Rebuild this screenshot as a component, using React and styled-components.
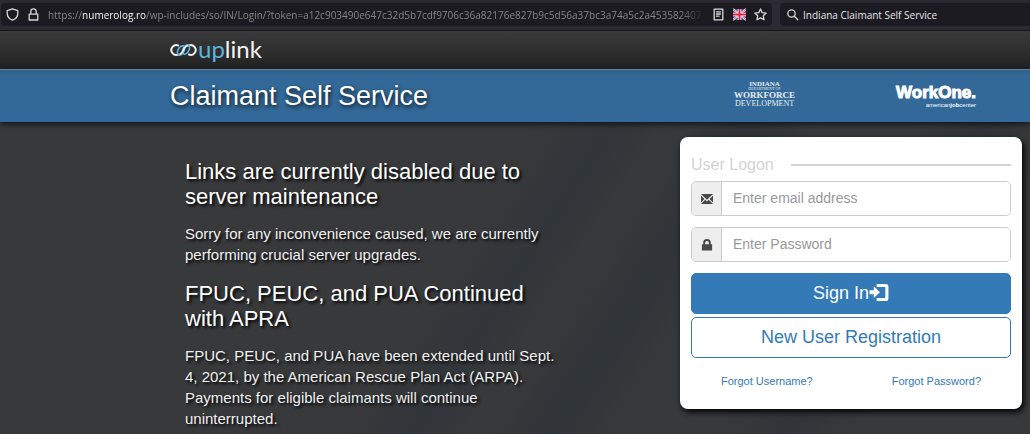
import React, { useState } from 'react'
import styled, { createGlobalStyle } from 'styled-components'

const GlobalStyle = createGlobalStyle`
    * {
        box-sizing: border-box;
    }

    body {
        margin: 0;
        background: #38393b;
        font-family: "Liberation Sans", Arial, sans-serif;
    }

    h1, h2, p {
        margin: 0;
        font-weight: 400;
    }
`

/* browser toolbar */

const Toolbar = styled.div`
    display: flex;
    gap: 8px;
    height: 31px;
    padding: 3px 0 4px 1px;
    background: #2b2a33;
    border-bottom: 1px solid #151515;
    font-family: "Open Sans", "Noto Sans", sans-serif;
`

const UrlField = styled.div`
    display: flex;
    align-items: center;
    flex: 78 1 0;
    min-width: 0;
    gap: 8px;
    padding: 0 5px;
    background: #1c1b22;
    border-radius: 4px;
`

const Url = styled.span`
    flex: 1;
    min-width: 0;
    overflow: hidden;
    white-space: nowrap;
    font-size: 10px;
    line-height: 24px;
    color: #85848b;
    mask-image: linear-gradient(to left, transparent, #000 24px);

    b {
        font-weight: 400;
        color: #f4f4f8;
    }
`

const SearchField = styled.label`
    display: flex;
    align-items: center;
    flex: 25 1 0;
    min-width: 0;
    gap: 4px;
    padding-left: 6px;
    background: #1c1b22;
    border-radius: 4px 0 0 4px;

    input {
        flex: 1;
        min-width: 0;
        padding: 0;
        border: 0;
        outline: 0;
        background: none;
        color: #e4e4e8;
        font: 10px "Open Sans", "Noto Sans", sans-serif;
    }
`

const Icon = styled.svg`
    flex: none;
    width: 13px;
    height: 13px;
    fill: none;
    stroke: #d6d6da;
    stroke-width: 1.3;
    stroke-linejoin: round;
    stroke-linecap: round;
`

/* site header */

const TopBar = styled.header`
    display: flex;
    align-items: center;
    height: 38px;
    padding-left: 170px;
    background: linear-gradient(#3b3b3b, #222);
`

const Brand = styled.a`
    display: flex;
    align-items: center;
    gap: 1px;
    padding-bottom: 2px;
    color: #f2f2f2;
    font: 400 24px/30px Lato, sans-serif;
    text-decoration: none;

    span span {
        color: #5cb3dd;
    }
`

const Rings = styled.svg`
    width: 27px;
    height: 16px;
    fill: none;
    stroke-width: 2;
`

const TitleBar = styled.div`
    display: flex;
    align-items: center;
    height: 53px;
    padding: 0 54px 0 170px;
    background: linear-gradient(#2f5f8c, #336998 6px);
    border-top: 1px solid #66839c;
    box-shadow: 0 2px 6px rgba(0, 0, 0, .7);
    position: relative;
    color: #fff;

    h1 {
        flex: 1;
        font-size: 27px;
        line-height: 32px;
        text-shadow: 1px 2px 4px rgba(0, 0, 0, .8);
    }
`

const WorkforceLogo = styled.div`
    display: flex;
    flex-direction: column;
    align-items: center;
    margin-right: 101px;
    padding-bottom: 3px;
    color: #e6edf4;
    font-family: "Liberation Serif", "Times New Roman", serif;
    font-size: 8px;
    line-height: 8px;

    b {
        font-size: 7px;
        line-height: 6px;
    }

    small {
        font-size: 4px;
        line-height: 4px;
    }

    strong {
        font-size: 9px;
        line-height: 9px;
    }
`

const WorkOneLogo = styled.div`
    display: flex;
    flex-direction: column;
    align-items: flex-end;
    font: bold 17px/18px "Liberation Sans", Arial, sans-serif;
    -webkit-text-stroke: 1px #fff;

    small {
        font-size: 6px;
        line-height: 6px;
        font-weight: 400;
        -webkit-text-stroke: 0;
    }
`

/* content */

const Main = styled.main`
    display: grid;
    grid-template-columns: minmax(0, 380px) 342px;
    justify-content: space-between;
    align-items: start;
    min-height: calc(100vh - 122px);
    padding: 15px 8px 0 185px;
    background: linear-gradient(123deg, #38393b 43%, #31363a 50%, #38393b 55%, #303539 61%, #38393b 67%, #38393b 74%, #313539 80%, #38393b 86%);
`

const News = styled.section`
    padding-top: 22px;
    color: #fff;
    text-shadow: 2px 2px 3px #000;

    h2 {
        margin-bottom: 14px;
        font-size: 22px;
        line-height: 25px;
    }

    p {
        margin-bottom: 16px;
        font-size: 15px;
        line-height: 21px;
        color: #f0f0f0;
    }

    p:last-child {
        margin-bottom: 0;
    }
`

const Card = styled.form`
    display: flex;
    flex-direction: column;
    padding: 18px 11px 21px;
    background: #fff;
    border-radius: 8px;
    box-shadow: 2px 3px 6px #000;
`

const Legend = styled.div`
    display: flex;
    align-items: center;
    gap: 17px;
    margin-bottom: 6px;
    color: #d3d3d3;
    font-size: 16px;
    line-height: 20px;

    &::after {
        content: '';
        flex: 1;
        height: 2px;
        background: #d3d3d3;
    }
`

const InputGroup = styled.label`
    display: flex;
    height: 35px;
    margin-bottom: 11px;
    border: 1px solid #ccc;
    border-radius: 5px;
    overflow: hidden;

    input {
        flex: 1;
        min-width: 0;
        padding: 0 11px 1px;
        border: 0;
        outline: 0;
        color: #555;
        font: 14px "Liberation Sans", Arial, sans-serif;
    }

    input::placeholder {
        color: #999;
        opacity: 1;
    }
`

const Addon = styled.span`
    display: flex;
    align-items: center;
    justify-content: center;
    width: 30px;
    background: #eee;
    border-right: 1px solid #ccc;

    svg {
        width: 12px;
        height: 12px;
        fill: #484848;
    }
`

const Button = styled.button`
    display: flex;
    align-items: center;
    justify-content: center;
    height: 41px;
    margin-bottom: 3px;
    border: 1px solid #337ab7;
    border-radius: 5px;
    background: ${props => (props.$primary ? '#337ab7' : '#fff')};
    color: ${props => (props.$primary ? '#fff' : '#337ab7')};
    font: 18px "Liberation Sans", Arial, sans-serif;
    cursor: pointer;

    svg {
        width: 20px;
        height: 17px;
        margin-bottom: 3px;
        fill: currentColor;
    }
`

const Links = styled.div`
    display: flex;
    justify-content: space-between;
    padding: 13px 30px 0;

    a {
        color: #337ab7;
        font-size: 11px;
        line-height: 14px;
        text-decoration: none;
    }
`

const UkFlag = () => (
    <Icon viewBox="0 0 13 13">
        <path fill="#3450a8" stroke="none" d="M0 1h13v11H0z" />
        <path stroke="#fff" strokeWidth="2" strokeLinecap="butt" d="M0 1l13 11M13 1L0 12" />
        <path stroke="#d8223c" strokeWidth=".8" strokeLinecap="butt" d="M0 1l13 11M13 1L0 12" />
        <path stroke="#fff" strokeWidth="3.600" strokeLinecap="butt" d="M6.500 1v11M0 6.500h13" />
        <path stroke="#e0233f" strokeWidth="2" strokeLinecap="butt" d="M6.500 1v11M0 6.500h13" />
    </Icon>
)

const BrowserBar = () => {
    const [query, setQuery] = useState('Indiana Claimant Self Service')

    return (
        <Toolbar>
            <UrlField>
                <Icon viewBox="0 0 13 13">
                    <path d="M6.500 .8L1.200 2.600v2.700c0 3.300 2.100 5.700 5.300 6.900 3.200-1.200 5.300-3.600 5.300-6.900V2.600z" />
                </Icon>
                <Icon viewBox="0 0 13 13">
                    <path d="M2.200 6.200h8.600v5.800H2.200zM3.800 6V3.600a2.700 2.700 0 015.400 0V6" />
                </Icon>
                <Url>
                    https://<b>numerolog.ro</b>/wp-includes/so/IN/Login/?token=a12c903490e647c32d5b7cdf9706c36a82176e827b9c5d56a37bc3a74a5c2a453582407
                </Url>
                <Icon viewBox="0 0 13 13">
                    <path d="M2.200 1.200h8.600v10.600H2.200zM4.500 3.800h4M4.500 6h4M4.500 8.200h2.500" />
                </Icon>
                <UkFlag />
                <Icon viewBox="0 0 13 13">
                    <path d="M6.500 1l1.700 3.600 4 .5-2.900 2.700.7 4-3.500-1.900L3 11.800l.7-4L.8 5.100l4-.5z" />
                </Icon>
            </UrlField>
            <SearchField>
                <Icon viewBox="0 0 13 13">
                    <circle cx="5.500" cy="5.500" r="3.700" />
                    <path d="M8.300 8.300l3.500 3.500" />
                </Icon>
                <input aria-label="Search" value={query} onChange={e => setQuery(e.target.value)} />
            </SearchField>
        </Toolbar>
    )
}

const LogonForm = () => (
    <Card onSubmit={e => e.preventDefault()}>
        <Legend>User Logon</Legend>
        <InputGroup>
            <Addon>
                <svg viewBox="0 0 11 11">
                    <path d="M0 1h11L5.500 6.200zM0 2.600l3.200 3L0 8.700zM11 2.600v6.100L7.800 5.600zM0 10l3.900-3.800 1.600 1.500 1.600-1.500L11 10z" />
                </svg>
            </Addon>
            <input type="email" aria-label="Email address" placeholder="Enter email address" />
        </InputGroup>
        <InputGroup>
            <Addon>
                <svg viewBox="0 0 11 11">
                    <path d="M.8 4.700h1.200V3.500a3.500 3.400 0 017 0v1.200h1.200V10.500H.8zM3.800 4.700h3.400V3.600a1.700 1.700 0 00-3.400 0z" />
                </svg>
            </Addon>
            <input type="password" aria-label="Password" placeholder="Enter Password" />
        </InputGroup>
        <Button type="submit" $primary>
            Sign In
            <svg viewBox="0 0 20 18">
                <path d="M0 6.500h4.500V2.500l6.500 6.200-6.500 6.200v-4H0zM7.500 0H17a3 3 0 013 3v12a3 3 0 01-3 3H7.500v-3.300H16a.7 .7 0 00.7-.7V4a.7 .7 0 00-.7-.7H7.500z" />
            </svg>
        </Button>
        <Button type="button">New User Registration</Button>
        <Links>
            <a href="#username">Forgot Username?</a>
            <a href="#password">Forgot Password?</a>
        </Links>
    </Card>
)

const App = () => {
    return (
        <>
            <GlobalStyle />
            <BrowserBar />
            <TopBar>
                <Brand href="#home">
                    <Rings viewBox="0 0 27 16">
                        <path stroke="#f2f2f2" d="M8.800 4.800A4.900 4.900 0 108.800 13.200" />
                        <path stroke="#f2f2f2" d="M18.200 4.800A4.900 4.900 0 1118.200 13.200" />
                        <ellipse stroke="#5cb3dd" strokeWidth="1.700" cx="11" cy="9.500" rx="3" ry="5" transform="rotate(28 11 9.500)" />
                        <ellipse stroke="#5cb3dd" strokeWidth="1.700" cx="16" cy="8.500" rx="3" ry="5" transform="rotate(28 16 8.500)" />
                        <path stroke="#f2f2f2" strokeWidth="1.700" d="M9.500 13.300c2.500-.5 3.200-2.300 4-4.300s1.800-4 4.500-4.300" />
                    </Rings>
                    <span><span>up</span>link</span>
                </Brand>
            </TopBar>
            <TitleBar>
                <h1>Claimant Self Service</h1>
                <WorkforceLogo>
                    <b>INDIANA</b>
                    <small>DEPARTMENT OF</small>
                    <strong>WORKFORCE</strong>
                    <span>DEVELOPMENT</span>
                </WorkforceLogo>
                <WorkOneLogo>
                    WorkOne.
                    <small>american<b>job</b>center</small>
                </WorkOneLogo>
            </TitleBar>
            <Main>
                <News>
                    <h2>Links are currently disabled due to server maintenance</h2>
                    <p>Sorry for any inconvenience caused, we are currently performing crucial server upgrades.</p>
                    <h2>FPUC, PEUC, and PUA Continued with APRA</h2>
                    <p>
                        FPUC, PEUC, and PUA have been extended until Sept. 4, 2021, by the American Rescue
                        Plan Act (ARPA). Payments for eligible claimants will continue uninterrupted.
                    </p>
                </News>
                <LogonForm />
            </Main>
        </>
    )
}

export default App
